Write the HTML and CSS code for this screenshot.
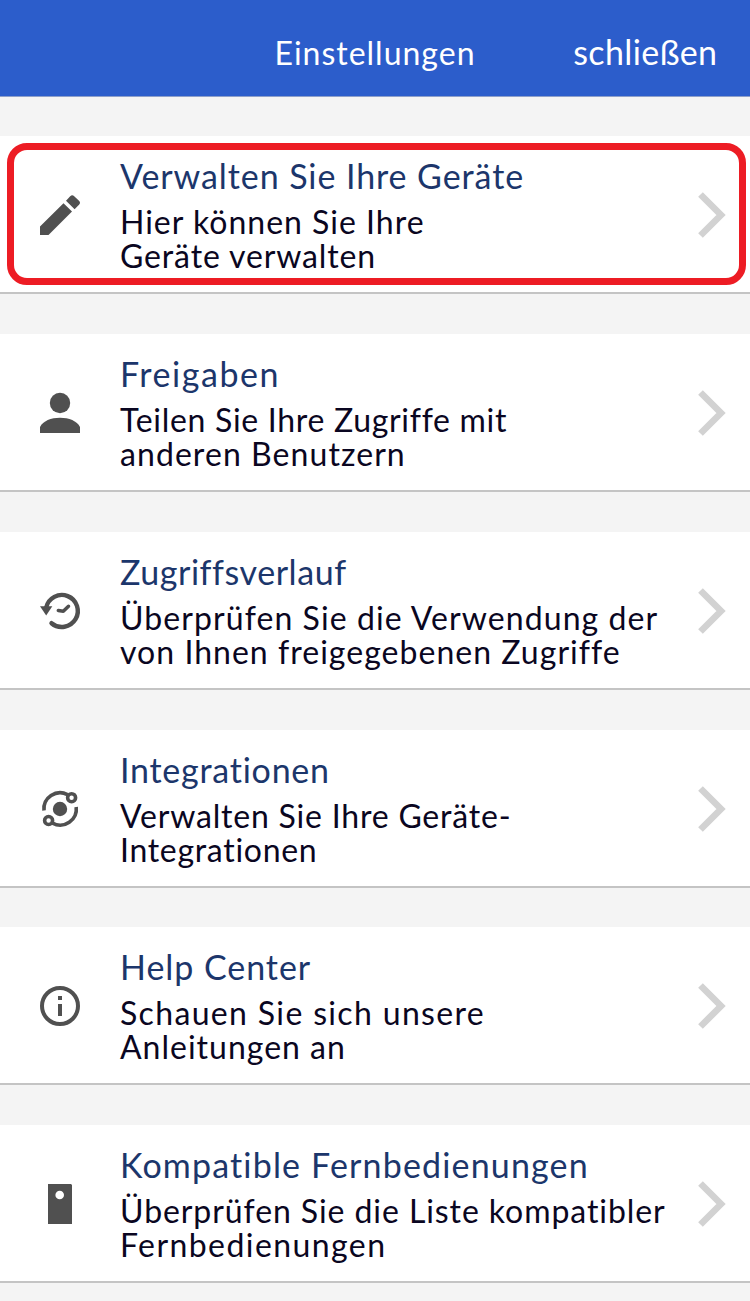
FILE: index.html
```html
<!doctype html>
<html lang="de">
  <head>
    <meta charset="utf-8">
    <title>Einstellungen</title>
    <link rel="stylesheet" href="styles.css">
  </head>
  <body>
    <svg class="sprite">
      <symbol id="chevron" viewBox="0 0 28 46">
        <path d="M2.5 2.5 L23 23 L2.5 43.5" fill="none" stroke="#d2d2d2" stroke-width="6.6" />
      </symbol>
    </svg>

    <header class="topbar">
      <h1>Einstellungen</h1>
      <a class="close">schließen</a>
    </header>

    <main class="settings">
      <section class="item highlighted">
        <svg class="icon" viewBox="0 0 40 40">
          <path d="M0 40V31.5L23.5 8.2L32 16.5L8.5 40ZM26 5.7L30.2 1.2Q32.2-.8 34.2 1.2L39 5.8Q41 7.8 39 9.8L34.6 14.2Z" />
        </svg>
        <div class="text">
          <h2 class="t1">Verwalten Sie Ihre Geräte</h2>
          <p><span class="d1">Hier können Sie Ihre</span><br><span class="d2">Geräte verwalten</span></p>
        </div>
        <svg class="chevron"><use href="#chevron" /></svg>
      </section>

      <section class="item">
        <svg class="icon" viewBox="0 0 40 40">
          <circle cx="20" cy="10" r="10.2" />
          <path d="M0 40V34C3 28 11 24.8 20 24.8S37 28 40 34V40Z" />
        </svg>
        <div class="text">
          <h2 class="t2">Freigaben</h2>
          <p><span class="d3">Teilen Sie Ihre Zugriffe mit</span><br><span class="d4">anderen Benutzern</span></p>
        </div>
        <svg class="chevron"><use href="#chevron" /></svg>
      </section>

      <section class="item">
        <svg class="icon" viewBox="0 0 40 40">
          <path class="line" d="M6.2 16.5A16 16 0 1 1 11.5 32.2" />
          <path class="line thin" d="M18.3 19.6L23.3 20.3L28.5 15.3" />
          <path d="M0 15.2H12.3L6.2 24.4Z" />
        </svg>
        <div class="text">
          <h2 class="t3">Zugriffsverlauf</h2>
          <p><span class="d5">Überprüfen Sie die Verwendung der</span><br><span class="d6">von Ihnen freigegebenen Zugriffe</span></p>
        </div>
        <svg class="chevron"><use href="#chevron" /></svg>
      </section>

      <section class="item">
        <svg class="icon" viewBox="0 0 40 40">
          <circle cx="20" cy="20" r="7.2" />
          <path class="orbit" d="M4 21.5A16.2 16.2 0 0 1 27.5 5.6M36.2 18A16.2 16.2 0 0 1 12.5 34.2" />
          <circle class="orbit" cx="31.6" cy="8.7" r="4" />
          <circle class="orbit" cx="8.6" cy="31.5" r="4" />
        </svg>
        <div class="text">
          <h2 class="t4">Integrationen</h2>
          <p><span class="d7">Verwalten Sie Ihre Geräte-</span><br><span class="d8">Integrationen</span></p>
        </div>
        <svg class="chevron"><use href="#chevron" /></svg>
      </section>

      <section class="item">
        <svg class="icon" viewBox="0 0 40 40">
          <circle class="ring" cx="20" cy="20" r="18" />
          <path d="M18 10h4v4h-4zM18 18h4v12h-4z" />
        </svg>
        <div class="text">
          <h2 class="t5">Help Center</h2>
          <p><span class="d9">Schauen Sie sich unsere</span><br><span class="d10">Anleitungen an</span></p>
        </div>
        <svg class="chevron"><use href="#chevron" /></svg>
      </section>

      <section class="item">
        <svg class="icon" viewBox="0 0 40 40">
          <path d="M8 0H31L32 1V40H8Z" />
          <circle cx="19.7" cy="11" r="4.3" fill="#fff" />
        </svg>
        <div class="text">
          <h2 class="t6">Kompatible Fernbedienungen</h2>
          <p><span class="d11">Überprüfen Sie die Liste kompatibler</span><br><span class="d12">Fernbedienungen</span></p>
        </div>
        <svg class="chevron"><use href="#chevron" /></svg>
      </section>
    </main>
  </body>
</html>
```
FILE: styles.css
```css
body {
  margin: 0;
  background-color: #f4f4f4;
  color: #0a0621;
  font-family: Lato, "Open Sans", sans-serif;
  font-variant-ligatures: none;
}

h1,
h2,
p {
  margin: 0;
  font-weight: normal;
  white-space: nowrap;
}

.sprite {
  display: none;
}

.topbar {
  display: grid;
  grid-template-columns: 1fr auto 1fr;
  align-items: center;
  box-sizing: border-box;
  height: 97px;
  padding: 8px 32.5px 0;
  border-bottom: 1px solid #8d9fca;
  background-color: #2c5dcb;
  color: #fff;
}

.topbar h1 {
  grid-column: 2;
  font-size: 32px;
  letter-spacing: 1px;
}

.close {
  justify-self: end;
  padding-bottom: 2px;
  font-size: 34px;
  letter-spacing: 0.4px;
}

.settings {
  display: flex;
  flex-direction: column;
  gap: 39.8px;
  padding-top: 39.2px;
}

.item {
  position: relative;
  display: flex;
  align-items: center;
  box-sizing: border-box;
  height: 158px;
  padding: 0 24.5px 0 40px;
  border-bottom: 2px solid #c4c4c4;
  background-color: #fff;
}

.highlighted::after {
  content: "";
  position: absolute;
  top: 7px;
  left: 7px;
  box-sizing: border-box;
  width: 739px;
  height: 142px;
  border: 7px solid #ed1c24;
  border-radius: 20px;
}

.icon {
  width: 40px;
  height: 40px;
  margin-top: 2px;
  margin-right: 40px;
  overflow: visible;
  fill: #505050;
}

.line {
  fill: none;
  stroke: #505050;
  stroke-width: 4.4;
  stroke-linecap: round;
  stroke-linejoin: round;
}

.thin {
  stroke-width: 3.5;
}

.orbit {
  fill: none;
  stroke: #505050;
  stroke-width: 3.6;
}

.ring {
  fill: none;
  stroke: #505050;
  stroke-width: 4;
}

.text {
  flex: 1;
  padding-bottom: 2px;
}

.text h2 {
  margin-bottom: 6px;
  color: #1c366b;
  font-size: 34px;
  line-height: 46px;
}

.text p {
  font-size: 32px;
  line-height: 34px;
  letter-spacing: 1px;
}

.chevron {
  width: 28px;
  height: 46px;
  margin-top: 2px;
}

/* tracking per line */
.t1 { letter-spacing: 0.92px; }
.t2 { letter-spacing: 1.55px; }
.t3 { letter-spacing: 0.55px; }
.t4 { letter-spacing: 0.75px; }
.t5 { letter-spacing: 0.95px; }
.t6 { letter-spacing: 1.16px; }
.d2 { letter-spacing: 0.87px; }
.d3 { letter-spacing: 0.7px; }
.d4 { letter-spacing: 1.07px; }
.d5 { letter-spacing: 1.08px; }
.d6 { letter-spacing: 1.03px; }
.d7 { letter-spacing: 0.8px; }
.d8 { letter-spacing: 0.7px; }
.d9 { letter-spacing: 1.34px; }
.d11 { letter-spacing: 0.92px; }
.d12 { letter-spacing: 1.42px; }
```
